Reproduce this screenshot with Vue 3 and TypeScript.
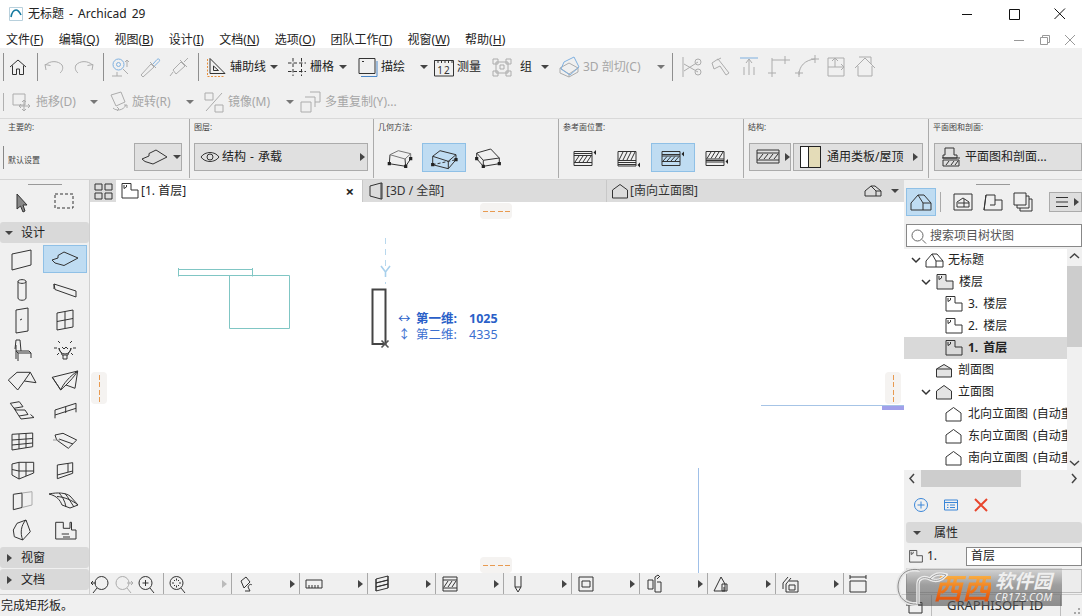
<script setup lang="ts">
import { h } from 'vue'

interface IconDef { d: string; w?: number; h?: number; acc?: string; ac?: string; fill?: string; dash?: string; accDash?: string; txt?: string; solid?: string }

const BLUE = '#7fb0e0'
const ORANGE = '#e8903c'
const dot = (x: number, y: number) => `M${x - 1.6} ${y - 1.6}h3.2v3.2h-3.2z`
const P: Record<string, IconDef> = {
  logo: { d: 'M1.5 1.5H14.5V14.5H1.5Z', w: 16, h: 16, acc: 'M3 11C4 6 6 4 8 4C10 4 11.5 6 13 9', ac: '#14799f' },
  home: { d: 'M4 12L12 5L20 12M6.5 10.5V19.5H10.5V14H13.5V19.5H17.5V10.5' },
  undo: { d: 'M4 15L3 9.5L8.5 10.5M3.5 10C8 5.5 16 5.5 20 10C21.5 13 20.5 16 18 18' },
  redo: { d: 'M20 15L21 9.5L15.5 10.5M20.5 10C16 5.5 8 5.5 4 10C2.5 13 3.5 16 6 18' },
  find: { d: 'M14 14L19 19M3 21H13M8 17V21M18 5V12M16 7L18 5L20 7', acc: 'M15 9.5A5.5 5.5 0 1 1 4 9.5A5.5 5.5 0 1 1 15 9.5M11.5 9.5A2 2 0 1 1 7.5 9.5A2 2 0 1 1 11.5 9.5' },
  pick: { d: 'M4 21L3 20L13 9L16 12L5 22ZM12 7L18 13', acc: 'M15 9L19 4.5C21 3 22.5 5 21 6.5L16.5 11' },
  inject: { d: 'M3 21L6 17M6 15L14 7L18 11L9 19ZM13 5L20 12M17 7L21 3' },
  guide: { d: 'M6 3.5V18.5H21ZM9.5 11V15.5H14.5Z', acc: 'M3.5 4V21.5H21', accDash: '2 1.5', ac: ORANGE },
  grid: { d: 'M8 3V21M16.5 3V21M3 8H21M3 16.5H21', dash: '3.5 2' },
  trace: { d: 'M4 3.5H20V18.5H4ZM7 6.5H9', acc: 'M6 21.5H22V6', ac: '#4a86c8' },
  measure: { d: 'M2.5 5.5H21.5V21H2.5ZM2.5 8V5.5M6 8V5.5M9.5 8V5.5M13 8V5.5M16.5 8V5.5M20 8V5.5', txt: '12' },
  group: { d: 'M6 7H18V18H6ZM3 4H8V9H3ZM16 4H21V9H16ZM3 16H8V21H3ZM16 16H21V21H16ZM10 10H14V14H10Z' },
  cut3d: { d: 'M3 13L12 8L21 13L12 19ZM3 13V18L12 22V19M21 13V17L12 22', acc: 'M7 7L17 2L22 12L13 20L4 14Z' },
  cut: { d: 'M4 2V22M5 9L19 17M5 16L19 7M22 7A3 3 0 1 1 16 7A3 3 0 1 1 22 7M22 17A3 3 0 1 1 16 17A3 3 0 1 1 22 17' },
  adjust: { d: 'M10 4L4 8L6 14L12 11L18 20L21 18L14 9L10 4M9 5L13 3' },
  intersect: { d: 'M12 4V20M7 12V20M17 12V20M9 8L12 4L15 8', acc: 'M3 3H21' },
  fillet: { d: 'M6 22V5H24M2 18H10M6 5V3M19 1V9' },
  arc: { d: 'M4 20C4 11 10 5 20 4M0 18H8M4 22V16M20 0V8M16 4H24' },
  move2: { d: 'M4 3H20V21H4ZM11 12H20M17 9L20 12L17 15M4 12H11M11 12V3M8 6L11 3L14 6' },
  roofhouse: { d: 'M2 13L12 3L22 13M5 11V21H19V11M6 2H18V9' },
  moveD: { d: 'M3 4H15V15H3ZM14 10V21M9 16H20M14 10L12 12M14 10L16 12M9 16L11 14M9 16L11 18M20 16L18 14M20 16L18 18M14 21L12 19M14 21L16 19' },
  rotateD: { d: 'M5 5L15 2L19 12L10 16ZM7 18C10 21 17 21 20 15M18 15H21V18M13 19L11 21M13 19L11 17' },
  mirror: { d: 'M4 21L20 3M3 3H11V10H3ZM13 15H21V22H13Z' },
  multi: { d: 'M3 12H13V22H3ZM7 7H17V17M12 2H22V12H17' },
  slabBtn: { d: 'M2 13L9 10V7.5L16 4L27 11L13 18L5 15.5Z', w: 30, h: 22 },
  eye: { d: 'M2 11C6 5 16 5 20 11C16 17 6 17 2 11ZM14 11A3 3 0 1 1 8 11A3 3 0 1 1 14 11', w: 22, h: 22 },
  g1: { d: 'M2.3 16.7L18.7 19.3L23.7 11.7M3 7.7L2.3 16.7M18 12L18.7 19.3', acc: 'M3 7.7L11.3 3.7L23.7 6.7V11.7M3 7.7L18 12L23.7 6.7', ac: '#777', solid: dot(2.3, 16.7) + dot(18.7, 19.3) + dot(23.7, 11.7), w: 26, h: 22 },
  g2: { d: 'M1.7 9.3L9 3.7L25 7.7L17.3 14.3ZM1.7 9.3V17.7L17.3 21.7L25 12.7V7.7M17.3 14.3V21.7', acc: 'M1.7 17.7L25 12.7', ac: '#333', accDash: '3 2', solid: dot(1.7, 17.7) + dot(25, 12.7), w: 26, h: 22 },
  g3: { d: 'M1.7 6L15.7 2L24.3 11L8.3 13.3ZM1.7 6V11.7L8.3 19.3L24.3 16.7V11M8.3 13.3V19.3', solid: dot(1.7, 11.7) + dot(8.3, 19.3) + dot(24.3, 16.7), w: 26, h: 22 },
  r1: { d: 'M2 4.5H20M2 6.5H20M2 8.5H20M2 15.5H20M2 18.5H20M2 4.5V18.5M20 4.5V18.5M3 15L7 9M7 15L11 9M11 15L15 9M15 15L19 9', solid: 'M24 3V8L21.5 5.5Z', w: 26, h: 22 },
  r2: { d: 'M2 4.5H20M2 13.5H20M2 15.5H20M2 17.5H20M2 19H20M2 4.5V19M20 4.5V19M3 13L7 5M7 13L11 5M11 13L15 5M15 13L19 5', solid: 'M24 15.5V20.5L21.5 18Z', w: 26, h: 22 },
  r3: { d: 'M2 4.5H20M2 7.5H20M2 9H20M2 14.5H20M2 18.5H20M2 4.5V18.5M20 4.5V18.5M3 14L7 9.5M7 14L11 9.5M11 14L15 9.5M15 14L19 9.5', solid: 'M24 4.5V9.5L21.5 7Z', w: 26, h: 22 },
  r4: { d: 'M2 4.5H20M2 12H20M2 13.5H20M2 15H20M2 18.5H20M2 4.5V18.5M20 4.5V18.5M3 11.5L7 5M7 11.5L11 5M11 11.5L15 5M15 11.5L19 5', solid: 'M24 12V17L21.5 14.5Z', w: 26, h: 22 },
  structBtn: { d: 'M2 3H24V16H2ZM2 6H24M2 13H24M4 12L8 7M9 12L13 7M14 12L18 7M19 12L23 7', w: 26, h: 20 },
  plan: { d: 'M4 2H13V9H16V12H2V9H4ZM1 12H19M2 14H18V20H2ZM5 19L8 15M10 19L13 15M14 19L17 15', w: 20, h: 22 },
  arrow: { d: 'M6 3L16 14L12 14L14 20L12 21L9.5 15L6 18Z', w: 22, h: 24, fill: '#888' },
  marquee: { d: 'M2 3H20V17H2Z', w: 22, h: 20, dash: '3 2' },
  wall: { d: 'M5 7L24 3V18L5 23Z', w: 30, h: 26 },
  slab: { d: 'M2 14L8 12V9.5L14 6L28 12L14 19.5L5 17Z', w: 30, h: 26 },
  column: { d: 'M11 4.5C11 2 19 2 19 4.5V21C19 24 11 24 11 21ZM11 4.5C11 7 19 7 19 4.5', w: 30, h: 26 },
  beam: { d: 'M4 7L26 14V20L5 12.5ZM4 7V12', w: 30, h: 26 },
  door: { d: 'M9 3L21 1V24L9 26ZM13 13L15 12', w: 30, h: 27 },
  win: { d: 'M7 6L23 3V20L7 23ZM7 14.5L23 11.5M15 5V21', w: 30, h: 26 },
  chair: { d: 'M9 8L9 22M9 3H13L14 14M9 14H22L24 16H11L9 14M11 16V24M24 16V21M9 3L8 12', w: 30, h: 26 },
  lamp: { d: 'M21 11A6 6 0 1 1 9 11C9 14 12 15 12 18H18C18 15 21 14 21 11ZM13 18V22H17V18M4 11H7M23 11H26M8 4L10 6M22 4L20 6M7 18L9 16M23 18L21 16M12 10L14 12L16 10L18 12', w: 30, h: 26 },
  roof: { d: 'M1.3 13L10 5.3H23.3L29 15.7L17.3 14L10.7 23ZM23.3 5.3L17.3 14', w: 30, h: 26 },
  shell: { d: 'M2.3 10.3L27.7 4L25 21.3L16 18L10.7 23ZM2.3 10.3C6 16 9 20 10.7 23C13 17 20 9 27.7 4M16 18C20 14 24 10 27.7 4', w: 30, h: 26 },
  stair: { d: 'M3.3 6.3L12.3 4.7L16 9.7L7 11.3ZM7 11.3L9 13H18L21 17.5L12 19ZM12 19L14 22L27 20.5L23.5 17.5', w: 30, h: 26 },
  rail: { d: 'M5 13L26 6.3M5 18L26 11.3M5 21.3V13M15.7 9.7V16M26 6.3V15.3', w: 30, h: 26 },
  curtain: { d: 'M5 7.3L25.7 6V19.7L5 23ZM5 13L25.7 11.5M5 18L25.7 16M12 7V22M19 6.5V21', w: 30, h: 26 },
  mesh: { d: 'M5 8L13 6.3L26.7 13L18.3 21.3L6.7 13ZM9 12L23 17', acc: 'M3 13H10', ac: '#999', w: 30, h: 26 },
  gridBox: { d: 'M5 7L12 5.3H26.7V16L12 22L5 18ZM12 5.3V22M5 12.5L12 14H26.7M19 5.3V19', w: 30, h: 26 },
  opening: { d: 'M7.3 8L22.7 5.7V16.3L7.3 21.7ZM7.3 18L22.7 14M18 6.5V15', w: 30, h: 26 },
  panel: { d: 'M6.3 7.3L15 6V20.5L6.3 22.7Z', acc: 'M15 6L25 4.7V18L15 20.5', ac: '#aaa', w: 30, h: 26 },
  morph: { d: 'M-1 7C8 5 16 6 20 9L28 18L20 21L12 18C10 13 7 9 -1 7M9 6C12 9 15 14 16 20M15 6.5C18 10 20 14 24 20M7 9.5C14 10 22 13 28 18', w: 30, h: 26 },
  shape: { d: 'M6.3 13L10 6.3L19 3L23.3 14.7L15.7 23L7.3 19.7ZM19 3C14 8 13 16 15.7 23', w: 30, h: 26 },
  zone: { d: 'M5.7 5.3H13.3V11.3H20V5.3H21.5V13H26V22H5.7ZM11.7 17H19M13 20H20', w: 30, h: 26 },
  tabGrid: { d: 'M3 2H10V8H3ZM13 2H20V8H13ZM3 11H10V17H3ZM13 11H20V17H13Z', w: 23, h: 19 },
  story: { d: 'M2 1.5H11V8H18V16H2ZM4 3V6.5L6.5 5V3', w: 20, h: 18 },
  tab3d: { d: 'M3 4L14 1V17L3 14ZM14 1H15V17H14', w: 18, h: 18 },
  elev: { d: 'M1.5 8L9 2.5L16.5 8V16H1.5Z', w: 18, h: 18 },
  elevT: { d: 'M2 8L9.5 2.5L17 8V16H2Z', w: 20, h: 18 },
  sect: { d: 'M1.5 8L9 3.5L16.5 8V16H1.5ZM1.5 8H16.5', w: 19, h: 18, fill: '#e4e4e4' },
  elevF: { d: 'M1.5 8L9 2.5L16.5 8V16H1.5Z', w: 19, h: 18, fill: '#e4e4e4' },
  storyF: { d: 'M2 1.5H11V8H18V16H2ZM4 3V6.5L6.5 5V3', w: 20, h: 18, fill: '#e4e4e4' },
  proj: { d: 'M2 11L9 3H15L22 11V18H2ZM9 3L14 11M14 11H22M14 11V18', w: 24, h: 20 },
  projS: { d: 'M1 10L7 3H12L18 10V16H1ZM7 3L11 10M11 10H18M11 10V16', w: 19, h: 18 },
  tabHouse: { d: 'M2 10L8 5H12L18 10V15H2ZM8 5L13 10H18M13 10V15', w: 20, h: 20 },
  nav1: { d: 'M2 2H20V18H2ZM5 15V10L11 6L17 10V15ZM12 7V15M6 11H17', w: 22, h: 20 },
  nav2: { d: 'M4 3H13V8H20V18H2ZM2 18L4 3M13 8V13H8', w: 22, h: 20 },
  nav3: { d: 'M2 2H14V14H2ZM5 14V17H17V5H14M8 17V20H20V8H17', w: 22, h: 22 },
  search: { d: 'M12 7.5A5.5 5.5 0 1 1 1 7.5A5.5 5.5 0 1 1 12 7.5M11 11.5L15 15.5', w: 16, h: 16 },
  zoomBack: { d: 'M18 9A6.5 6.5 0 1 1 5 9A6.5 6.5 0 1 1 18 9M7 14L3 19M1 9H6M1 9L3 7M1 9L3 11', w: 20, h: 20 },
  zoomFwd: { d: 'M15 9A6.5 6.5 0 1 1 2 9A6.5 6.5 0 1 1 15 9M13 14L17 19M13 9H19M19 9L17 7M19 9L17 11', w: 20, h: 20 },
  zoomIn: { d: 'M15 9A6.5 6.5 0 1 1 2 9A6.5 6.5 0 1 1 15 9M13 14L17 19M8.5 6V12M5.5 9H11.5', w: 20, h: 20 },
  zoomFit: { d: 'M15 9A6.5 6.5 0 1 1 2 9A6.5 6.5 0 1 1 15 9M13 14L17 19M8.5 4.5V6.5M8.5 11.5V13.5M4 9H6M11 9H13M6 6L7 7M11 6L10 7M6 12L7 11M11 12L10 11', w: 20, h: 20 },
  b1: { d: 'M5 7L10 3L14 8L8 14ZM9 17L14 17L12 13M12 13C13 10 15 10 16 11', w: 20, h: 20 },
  b2: { d: 'M2 6H18V14H2ZM5 11V14M8 11V14M11 11V14M14 11V14', w: 20, h: 20 },
  b3: { d: 'M4 5L16 2V6L4 9ZM4 9L16 6V10L4 13ZM4 13L16 10V14L4 17ZM4 5V17M16 2V14', w: 20, h: 20 },
  b4: { d: 'M3 3H17V17H3ZM3 6H17M3 14H17M4 13L8 7M8 13L12 7M12 13L16 7', w: 20, h: 20 },
  b5: { d: 'M7 2V13L10 18L13 13V2M7 13H13', w: 20, h: 20 },
  b6: { d: 'M3 3H17V17H3ZM6 7H14V13H6Z', w: 20, h: 20 },
  b7: { d: 'M4 6H9V15H4ZM11 8V3L14 1L16 3M13 8H17V18H11V8M13 5L15 3', w: 20, h: 20 },
  b8: { d: 'M2 17L9 3L13 10V17ZM10 10H15V17H10ZM12 13V17', w: 20, h: 20 },
  b9: { d: 'M3 9L8 3M6 10L11 4M9 7H18V18H6V10M3 9V15M9 11H15V16H9Z', w: 20, h: 20 },
  b10: { d: 'M2 7H18V18H2ZM2 1V5M18 1V5M2 3H18', w: 20, h: 20 },
  winSmall: { d: 'M5 5.5H18V16H5ZM5 8H18M1 2V6M1 4H4', w: 20, h: 18 }
}

const Ic = (props: { n: string }) => {
  const i = P[props.n]
  const w = i.w ?? 24
  const hh = i.h ?? 24
  const kids = [h('path', { d: i.d, fill: i.fill ?? 'none', 'stroke-dasharray': i.dash })]
  if (i.acc) kids.push(h('path', { d: i.acc, fill: 'none', stroke: i.ac ?? BLUE, 'stroke-dasharray': i.accDash }))
  if (i.solid) kids.push(h('path', { d: i.solid, fill: '#222', stroke: 'none' }))
  if (i.txt) kids.push(h('text', { x: 12, y: 19, 'text-anchor': 'middle', 'font-size': 10, fill: '#333', stroke: 'none', 'letter-spacing': 1 }, i.txt))
  return h('svg', { class: 'ic', width: w, height: hh, viewBox: `0 0 ${w} ${hh}` }, kids)
}
Ic.props = ['n']

const menus: [string, string][] = [['文件', 'F'], ['编辑', 'Q'], ['视图', 'B'], ['设计', 'I'], ['文档', 'N'], ['选项', 'O'], ['团队工作', 'T'], ['视窗', 'W'], ['帮助', 'H']]

const row2 = [
  { icon: 'moveD', label: '拖移(D)', cls: 't2-move', arr: true },
  { icon: 'rotateD', label: '旋转(R)', cls: 't2-rot', arr: true },
  { icon: 'mirror', label: '镜像(M)', cls: 't2-mir', arr: true },
  { icon: 'multi', label: '多重复制(Y)...', cls: 't2-mul', arr: false }
]

const tools = ['wall', 'slab', 'column', 'beam', 'door', 'win', 'chair', 'lamp', 'roof', 'shell', 'stair', 'rail', 'curtain', 'mesh', 'gridBox', 'opening', 'panel', 'morph', 'shape', 'zone']

const tree = [
  { icon: 'projS', label: '无标题', lvl: 0, chev: true },
  { icon: 'storyF', label: '楼层', lvl: 1, chev: true },
  { icon: 'story', label: '3. 楼层', lvl: 2, chev: false },
  { icon: 'story', label: '2. 楼层', lvl: 2, chev: false },
  { icon: 'story', label: '1. 首层', lvl: 2, chev: false, sel: true },
  { icon: 'sect', label: '剖面图', lvl: 1, chev: false },
  { icon: 'elevF', label: '立面图', lvl: 1, chev: true },
  { icon: 'elevT', label: '北向立面图 (自动重建模型)', lvl: 2, chev: false },
  { icon: 'elevT', label: '东向立面图 (自动重建模型)', lvl: 2, chev: false },
  { icon: 'elevT', label: '南向立面图 (自动重建模型)', lvl: 2, chev: false }
]

const bottom = ['b1', 'b2', 'b3', 'b4', 'b5', 'b6', 'b7', 'b8', 'b9']
const cutIcons = ['cut', 'adjust', 'intersect', 'fillet', 'arc', 'move2', 'roofhouse']
</script>

<template>
  <div class="app">
    <header class="title">
      <Ic n="logo" class="tlogo" />
      <span>无标题 - Archicad 29</span>
      <div class="winbtns">
        <svg class="wb" width="14" height="14" viewBox="0 0 14 14"><path d="M1 7.5H11" /></svg>
        <svg class="wb" width="14" height="14" viewBox="0 0 14 14"><path d="M2.5 2.5H12.5V12.5H2.5Z" /></svg>
        <svg class="wb" width="14" height="14" viewBox="0 0 14 14"><path d="M1.5 1.5L12 12M12 1.5L1.5 12" /></svg>
      </div>
    </header>

    <nav class="menu">
      <span v-for="m in menus" :key="m[1]" class="mi">{{ m[0] }}(<u>{{ m[1] }}</u>)</span>
      <div class="mdi">
        <svg width="14" height="14" viewBox="0 0 14 14"><path d="M1 7.5H11" /></svg>
        <svg width="14" height="14" viewBox="0 0 14 14"><path d="M2.5 4.5H9.5V11.5H2.5ZM4.5 4.5V2.5H11.5V9.5H9.5" /></svg>
        <svg width="14" height="14" viewBox="0 0 14 14"><path d="M2 2L12 12M12 2L2 12" /></svg>
      </div>
    </nav>

    <section class="toolbars">
      <div class="row row1">
        <i class="sep"></i>
        <div class="cell c-home"><Ic n="home" /></div>
        <i class="sep"></i>
        <div class="cells c-undo dim"><Ic n="undo" /><Ic n="redo" /></div>
        <i class="sep"></i>
        <div class="cells c-pick dim"><Ic n="find" /><Ic n="pick" /><Ic n="inject" /></div>
        <i class="sep"></i>
        <div class="tool t-guide"><span class="ti"><Ic n="guide" /></span><span class="lbl">辅助线</span><b class="arr"></b></div>
        <div class="tool t-grid"><span class="ti"><Ic n="grid" /></span><span class="lbl">栅格</span><b class="arr"></b></div>
        <div class="tool t-trace"><span class="ti"><Ic n="trace" /></span><span class="lbl">描绘</span><b class="arr"></b></div>
        <div class="tool t-meas"><span class="ti"><Ic n="measure" /></span><span class="lbl">测量</span></div>
        <div class="tool t-group"><span class="ti dim"><Ic n="group" /></span><span class="lbl">组</span><b class="arr"></b></div>
        <div class="tool t-cut dim"><span class="ti"><Ic n="cut3d" /></span><span class="lbl">3D 剖切(C)</span><b class="arr"></b></div>
        <i class="sep"></i>
        <div class="cells c-edit dim"><Ic v-for="n in cutIcons" :key="n" :n="n" /></div>
      </div>
      <div class="row row2">
        <i class="sep"></i>
        <div v-for="t in row2" :key="t.icon" class="tool dim" :class="t.cls">
          <span class="ti"><Ic :n="t.icon" /></span><span class="lbl">{{ t.label }}</span><b v-if="t.arr" class="arr"></b>
        </div>
      </div>
    </section>

    <section class="info">
      <div class="sec s1">
        <div class="cap">主要的:</div>
        <div class="ctl">
          <i class="tick"></i><span class="cap default">默认设置</span>
          <div class="btn favbtn"><Ic n="slabBtn" /><i class="vdiv"></i><b class="arr"></b></div>
        </div>
      </div>
      <div class="sec s2">
        <div class="cap">图层:</div>
        <div class="ctl">
          <div class="btn layer"><Ic n="eye" /><span class="btxt">结构 - 承载</span><b class="arr right"></b></div>
        </div>
      </div>
      <div class="sec s3">
        <div class="cap">几何方法:</div>
        <div class="ctl opts">
          <div class="opt"><Ic n="g1" /></div>
          <div class="opt on"><Ic n="g2" /></div>
          <div class="opt"><Ic n="g3" /></div>
        </div>
      </div>
      <div class="sec s4">
        <div class="cap">参考面位置:</div>
        <div class="ctl opts">
          <div class="opt"><Ic n="r1" /></div>
          <div class="opt"><Ic n="r2" /></div>
          <div class="opt on"><Ic n="r3" /></div>
          <div class="opt"><Ic n="r4" /></div>
        </div>
      </div>
      <div class="sec s5">
        <div class="cap">结构:</div>
        <div class="ctl struct">
          <div class="btn st1"><Ic n="structBtn" /><b class="arr right"></b></div>
          <div class="btn st2"><i class="swatch"><i class="sw-l"></i><i class="sw-r"></i></i><span class="btxt">通用类板/屋顶</span><b class="arr right"></b></div>
        </div>
      </div>
      <div class="sec s6">
        <div class="cap">平面图和剖面:</div>
        <div class="ctl">
          <div class="btn fp"><Ic n="plan" /><span class="btxt">平面图和剖面...</span></div>
        </div>
      </div>
    </section>

    <main class="body">
      <aside class="palette">
        <div class="grip"></div>
        <div class="ptop"><Ic n="arrow" /><Ic n="marquee" /></div>
        <div class="phead"><b class="arr"></b><span>设计</span></div>
        <div class="pgrid">
          <div v-for="t in tools" :key="t" class="pcell" :class="{ on: t === 'slab' }"><Ic :n="t" /></div>
        </div>
        <div class="phead closed"><b class="arr right"></b><span>视窗</span></div>
        <div class="phead closed"><b class="arr right"></b><span>文档</span></div>
      </aside>

      <div class="center">
        <div class="tabs">
          <div class="tgrid"><Ic n="tabGrid" /></div>
          <div class="tab active"><Ic n="story" /><span>[1. 首层]</span><span class="tclose">×</span></div>
          <div class="tab"><Ic n="tab3d" /><span>[3D / 全部]</span></div>
          <div class="tab t3"><Ic n="elev" /><span>[南向立面图]</span></div>
          <div class="tright"><Ic n="tabHouse" /><b class="arr"></b></div>
        </div>
        <div class="canvas">
          <svg class="draw" width="814" height="371" viewBox="90 202 814 371">
            <path d="M229.5 275.5H289.5V328.5H229.5ZM178.5 269.5H252.5V275.5H178.5ZM178.5 268V276.5M252.5 268V276.5" fill="none" stroke="#80c6c4" />
            <path d="M761 405.5H904" stroke="#a6c4e6" fill="none" />
            <path d="M698.5 468V573" stroke="#a0c0e8" fill="none" />
            <rect x="882" y="406" width="22" height="4" fill="#a0a0ea" />
            <path d="M385.5 238V284" stroke="#b8d8ee" stroke-dasharray="6 5" fill="none" />
            <path d="M381 266L385.5 272L390 266M385.5 272V277" stroke="#a8d0ec" stroke-width="1.6" fill="none" />
            <path d="M372.5 289.5H385.5V344H372.5Z" fill="none" stroke="#444" stroke-width="2" />
            <path d="M381.5 340.5L388.5 347.5M388.5 340.5L381.5 347.5" stroke="#555" stroke-width="1.6" fill="none" />
          </svg>
          <div class="handle h-top"><i></i></div>
          <div class="handle h-bot"><i></i></div>
          <div class="handle v h-left"><i></i></div>
          <div class="handle v h-right"><i></i></div>
          <div class="dims">
            <div class="dim-row strong"><span class="sym">↔</span><span class="dk">第一维:</span><span>1025</span></div>
            <div class="dim-row"><span class="sym">↕</span><span class="dk">第二维:</span><span>4335</span></div>
          </div>
        </div>
        <div class="bottombar">
          <div class="zooms">
            <span><Ic n="zoomBack" /></span>
            <span class="dim"><Ic n="zoomFwd" /></span>
            <span><Ic n="zoomIn" /></span>
          </div>
          <div class="bcell"><Ic n="zoomFit" /><b class="arr right faint"></b></div>
          <div v-for="n in bottom" :key="n" class="bcell"><Ic :n="n" /><b class="arr right"></b></div>
          <div class="bcell last"><Ic n="b10" /></div>
        </div>
      </div>

      <aside class="panel">
        <div class="grip"></div>
        <div class="navtabs">
          <div class="ntab on"><Ic n="proj" /></div>
          <i class="nsep"></i>
          <div class="ntab"><Ic n="nav1" /></div>
          <div class="ntab"><Ic n="nav2" /></div>
          <div class="ntab"><Ic n="nav3" /></div>
          <div class="nmenu"><svg width="16" height="12" viewBox="0 0 16 12"><path d="M1 1.5H13M1 6H13M1 10.5H13" /></svg><b class="arr right"></b></div>
        </div>
        <div class="searchbox"><Ic n="search" /><span>搜索项目树状图</span></div>
        <div class="treewrap">
          <div class="tree">
            <div v-for="r in tree" :key="r.label" class="trow" :class="[`l${r.lvl}`, { sel: r.sel }]">
              <svg v-if="r.chev" class="chev" width="10" height="10" viewBox="0 0 10 10"><path d="M1 3L5 7L9 3" /></svg>
              <Ic :n="r.icon" />
              <span class="tlabel">{{ r.label }}</span>
            </div>
          </div>
          <div class="vscroll">
            <svg class="sa" width="15" height="15" viewBox="0 0 15 15"><path d="M3 9L7.5 5L12 9" /></svg>
            <div class="vtrack"><div class="vthumb"></div></div>
            <svg class="sa" width="15" height="15" viewBox="0 0 15 15"><path d="M3 6L7.5 10L12 6" /></svg>
          </div>
        </div>
        <div class="hscroll">
          <svg class="sa" width="17" height="17" viewBox="0 0 17 17"><path d="M10 4L6 8.5L10 13" /></svg>
          <div class="htrack"><div class="hthumb"></div></div>
          <svg class="sa" width="17" height="17" viewBox="0 0 17 17"><path d="M7 4L11 8.5L7 13" /></svg>
        </div>
        <div class="nactions">
          <svg width="16" height="16" viewBox="0 0 16 16" class="blue"><path d="M14.5 8A6.5 6.5 0 1 1 1.5 8A6.5 6.5 0 1 1 14.5 8M8 4.5V11.5M4.5 8H11.5" /></svg>
          <svg width="16" height="16" viewBox="0 0 16 16" class="blue"><path d="M1.5 3H14.5V13H1.5ZM1.5 5.5H14.5M4 8H5.5M7 8H12M4 10.5H5.5M7 10.5H12" /></svg>
          <svg width="16" height="16" viewBox="0 0 16 16" class="red"><path d="M2 2L14 14M14 2L2 14" /></svg>
        </div>
        <div class="phead props"><b class="arr"></b><span>属性</span></div>
        <div class="proprow">
          <Ic n="story" class="small" /><span class="pnum">1.</span>
          <div class="pinput">首层</div>
        </div>
        <div class="pfoot"><div class="pbox"></div></div>
        <div class="watermark">
          <svg class="wlogo" width="52" height="42" viewBox="0 0 52 42">
            <path d="M24 4C10 1 2 10 2 21C2 32 10 39 22 38" fill="none" stroke="#e6e6e6" stroke-width="4" />
            <path d="M24 4C10 1 2 10 2 21C2 32 10 39 22 38" fill="none" stroke="#8a8a8a" stroke-width="1" />
            <path d="M22 38V18C22 12 28 10 34 13C38 8 44 7 50 9C46 14 40 16 34 13" fill="none" stroke="#ececec" stroke-width="3.5" />
            <path d="M22 38V18C22 12 28 10 34 13C38 8 44 7 50 9C46 14 40 16 34 13" fill="none" stroke="#8a8a8a" stroke-width=".8" />
          </svg>
          <span class="wm-x">西西</span>
          <span class="wm-sub"><span class="wm-s">软件园</span><span class="wm-c">CR173.COM</span></span>
        </div>
      </aside>
    </main>

    <footer class="status">
      <span>完成矩形板。</span>
      <div class="sright">
        <Ic n="winSmall" />
        <i class="svl"></i>
        <span class="gid">GRAPHISOFT ID</span>
        <i class="svl r"></i>
        <i class="sgrip"></i>
      </div>
    </footer>
  </div>
</template>

<style scoped>
.app {
  position: relative;
  width: 1082px;
  height: 616px;
  overflow: hidden;
  background: #f0f0f0;
  color: #222;
  display: flex;
  flex-direction: column;
  font: 12px/1 "Noto Sans", "Noto Sans CJK SC", sans-serif;
}
.ic { fill: none; stroke: #333; stroke-width: 1; display: block; flex: none; overflow: visible; }
.dim, .dim .ic { color: #a6a6a6; stroke: #acacac; }
.dim :deep(text) { fill: #aaa; }

.title { height: 27px; background: #fff; display: flex; align-items: center; padding-left: 8px; }
.title span { margin-left: 4px; font-size: 12px; word-spacing: 2px; }
.tlogo { stroke: #b8d0dc; stroke-width: 1; }
.tlogo :deep(path + path) { stroke-width: 1.6; }
.winbtns { margin-left: auto; display: flex; width: 106px; margin-right: 15px; justify-content: space-between; }
.wb { fill: none; stroke: #111; stroke-width: 1; }

.menu { height: 21px; box-sizing: border-box; padding: 4px 0 0 6px; background: #fff; display: flex; align-items: center; gap: 15.2px; }
.mi { white-space: nowrap; color: #222; }
.mdi { margin-left: auto; display: flex; gap: 11px; padding-right: 5px; }
.mdi svg { fill: none; stroke: #999; }

.toolbars { height: 70px; border-bottom: 1px solid #d9d9d9; box-sizing: content-box; }
.row { display: flex; align-items: center; }
.row1 { height: 37px; padding-left: 3px; }
.row2 { height: 33px; padding-left: 3px; }
.sep { width: 1px; height: 28px; background: #8f8f8f; flex: none; }
.row2 .sep { height: 18px; background: #b0b0b0; }
.cell, .cells { display: flex; align-items: center; }
.c-home { width: 33px; padding-left: 2px; box-sizing: border-box; }
.c-undo { padding: 0 7px 0 4px; gap: 6px; }
.c-pick { padding: 0 7px 0 5px; gap: 5px; }
.c-edit { padding-left: 6px; gap: 5px; }
.tool { display: flex; align-items: center; }
.ti { width: 26px; display: flex; justify-content: center; flex: none; }
.lbl { white-space: nowrap; flex: none; }
.arr { display: block; width: 18px; height: 8px; flex: none; position: relative; }
.arr::before { content: ""; position: absolute; left: 50%; top: 2px; margin-left: -4px; border-style: solid; border-width: 4px 4px 0; border-color: #444 transparent transparent; }
.arr.right::before { top: 0; margin-left: -2px; border-width: 4px 0 4px 5px; border-color: transparent transparent transparent #444; }
.arr.faint::before { border-left-color: #bbb; }
.dim .arr::before { border-top-color: #777; }

.t-guide { margin-left: 3px; }
.t-guide .ti { width: 28px; }
.t-guide .lbl { width: 36px; }
.t-guide .arr { width: 16px; }
.t-grid { margin-left: 2px; }
.t-grid .lbl { width: 24px; }
.t-trace { margin-left: 2px; }
.t-trace .lbl { width: 24px; margin-left: 1px; margin-right: 10px; }
.t-meas .ti { width: 22px; }
.t-meas .lbl { margin-left: 2px; width: 24px; }
.t-group { margin-left: 8px; }
.t-group .lbl { margin-left: 5px; width: 12px; margin-right: 4px; }
.t-cut { margin-left: 2px; margin-right: 2px; }
.t-cut .lbl { margin-left: 1px; width: 60px; margin-right: 9px; }

.tool[class*="t2-"] { margin-left: 2px; }
.tool[class*="t2-"] .lbl { margin-left: 1px; width: 40px; }
.tool[class*="t2-"] .arr { margin-left: 9px; }
.t2-move { margin-left: 5px !important; }
.t2-mir .lbl { width: 44px !important; }
.t2-mul { margin-left: -2px !important; }
.t2-mul .lbl { margin-left: 2px !important; width: auto !important; }

.info { height: 60px; display: flex; border-bottom: 1px solid #d4d4d4; }
.sec { border-right: 1px solid #ababab; box-sizing: border-box; padding-top: 3px; margin-bottom: 1px; position: relative; flex: none; }
.cap { font-size: 8px; height: 20px; padding-left: 4px; padding-top: 1px; color: #444; white-space: nowrap; }
.ctl { display: flex; align-items: center; }
.s1 { width: 190px; }
.s1 .cap { padding-left: 8px; }
.s2 { width: 184px; }
.s3 { width: 185px; }
.s4 { width: 185px; }
.s5 { width: 185px; }
.s6 { width: 153px; border-right: 0; }
.tick { width: 1px; height: 23px; background: #888; margin-left: 3px; }
.s1 .cap.default { padding: 0; margin-left: 4px; height: auto; margin-top: 6px; }
.btn { background: #e0e0e0; border: 1px solid #ababab; box-sizing: border-box; height: 28px; display: flex; align-items: center; }
.favbtn { width: 48px; margin-left: 94px; padding-left: 5px; }
.favbtn .ic { width: 30px; }
.vdiv { width: 1px; height: 24px; background: #aaa; margin-left: 1px; }
.favbtn .arr { width: 11px; }
.layer { width: 174px; margin-left: 4px; padding-left: 4px; }
.layer .btxt { margin-left: 1px; word-spacing: 1px; }
.layer .arr { margin-left: auto; width: 11px; }
.btxt { white-space: nowrap; }
.opts { padding-left: 4px; }
.opt { width: 44px; height: 29px; box-sizing: border-box; display: flex; align-items: center; justify-content: center; position: relative; }
.opt.on { background: #bfdcf2; border: 1px solid #8fc0e6; }
.struct { padding-left: 5px; gap: 2px; }
.st1 { width: 42px; padding-left: 5px; }
.st1 .arr { width: 9px; margin-left: 1px; }
.st2 { width: 130px; padding-left: 6px; }
.st2 .btxt { margin-left: 6px; }
.st2 .arr { margin-left: 6px; width: 11px; }
.swatch { display: flex; width: 21px; height: 22px; border: 1px solid #222; flex: none; box-sizing: border-box; }
.sw-l { width: 7px; background: radial-gradient(#999 30%, #fff 32%) 0 0 / 2px 2px; border-right: 1px solid #222; }
.sw-r { flex: 1; background: #e4dcb8 radial-gradient(#a89a68 30%, transparent 32%) 0 0 / 2px 2px; }
.fp { width: 148px; margin-left: 5px; padding-left: 6px; }
.fp .btxt { margin-left: 4px; }

.body { flex: 1; display: flex; min-height: 0; }
.palette { width: 90px; flex: none; border-right: 1px solid #d0d0d0; box-sizing: border-box; display: flex; flex-direction: column; }
.grip { height: 1px; background: #999; width: 34px; margin: 4px auto 0; flex: none; }
.ptop { display: flex; justify-content: space-between; padding: 6px 14px 0 11px; height: 37px; box-sizing: border-box; }
.phead { height: 21px; flex: none; background: #d9d9d9; border-radius: 3px; display: flex; align-items: center; font-size: 12px; }
.phead .arr { width: 17px; margin-right: 4px; margin-left: 0; }
.phead.closed { margin-bottom: 1px; }
.pgrid { display: grid; grid-template-columns: 43px 44px; grid-auto-rows: 30px; padding-top: 2px; height: 304px; box-sizing: border-box; }
.pcell { display: flex; align-items: center; justify-content: center; }
.pcell.on { background: #bfdcf2; border: 1px solid #8fc0e6; box-sizing: border-box; height: 28px; align-self: start; }
.center { width: 814px; flex: none; display: flex; flex-direction: column; }
.tabs { height: 22px; display: flex; background: #dcdcdc; flex: none; }
.tgrid { width: 26px; display: flex; align-items: center; justify-content: center; }
.tab { width: 244px; display: flex; align-items: center; padding-left: 4px; box-sizing: border-box; gap: 1px; border-left: 1px solid #c8c8c8; white-space: nowrap; color: #333; }
.tab.t3 { width: 254px; }
.tab.active { background: #fff; width: 246px; border-left: 0; color: #222; }
.tclose { margin-left: auto; margin-right: 8px; font-size: 15px; font-weight: 700; }
.tright { display: flex; align-items: center; flex: 1; padding-left: 3px; }
.tright .arr { margin-left: 3px; }
.canvas { flex: none; height: 371px; background: #fff; position: relative; }
.draw { position: absolute; left: 0; top: 0; display: block; }
.handle { position: absolute; width: 32px; height: 16px; background: #f5f3f1; border-radius: 4px; display: flex; align-items: center; justify-content: center; }
.handle i { display: block; width: 27px; height: 1px; background: repeating-linear-gradient(90deg, #e89a50 0 5px, transparent 5px 7.3px); }
.handle.v { width: 16px; height: 32px; }
.handle.v i { width: 1px; height: 27px; background: repeating-linear-gradient(180deg, #e89a50 0 5px, transparent 5px 7.3px); }
.h-top { left: 390px; top: 1px; }
.h-bot { left: 390px; bottom: 0; }
.h-left { left: 1px; top: 170px; }
.h-right { left: 795px; top: 170px; }
.dims { position: absolute; left: 308px; top: 109px; color: #3b6fd0; font-size: 12.5px; line-height: 16px; }
.dim-row { display: flex; white-space: nowrap; }
.dim-row.strong { font-weight: 700; color: #2a5fc8; }
.sym { width: 18px; font-weight: 400; }
.dk { width: 53px; }
.bottombar { height: 21px; flex: none; display: flex; align-items: center; }
.zooms { display: flex; width: 73px; box-sizing: border-box; justify-content: space-between; padding: 0 6px 0 0; }
.bcell { width: 68px; height: 21px; box-sizing: border-box; border-left: 1px solid #a8a8a8; display: flex; align-items: center; padding-left: 4px; flex: none; }
.bcell .arr { margin-left: auto; width: 15px; }
.bcell.last { width: auto; }

.panel { flex: 1; min-width: 0; position: relative; display: flex; flex-direction: column; }
.navtabs { display: flex; align-items: center; height: 33px; padding-left: 2px; flex: none; }
.ntab { width: 30px; height: 28px; display: flex; align-items: center; justify-content: center; box-sizing: border-box; flex: none; }
.ntab.on { background: #bfdcf2; border: 1px solid #8fc0e6; margin-right: 4px; }
.nsep { width: 1px; height: 20px; background: #aaa; margin-right: 7px; }
.nmenu { width: 33px; height: 20px; background: #dedede; border: 1px solid #ababab; box-sizing: border-box; display: flex; align-items: center; padding-left: 5px; margin-left: 11px; }
.nmenu svg { fill: none; stroke: #333; }
.nmenu .arr { width: 9px; }
.searchbox { margin-left: 2px; height: 23px; border: 1px solid #888; background: #fff; box-sizing: border-box; display: flex; align-items: center; padding-left: 4px; gap: 3px; color: #555; margin-top: 6px; flex: none; }
.searchbox .ic { stroke: #666; }
.treewrap { display: flex; height: 221px; flex: none; margin-top: 2px; }
.tree { width: 163px; background: #fff; overflow: hidden; flex: none; }
.trow { height: 22px; display: flex; align-items: center; gap: 4px; white-space: nowrap; overflow: hidden; position: relative; }
.trow.l0 { padding-left: 7px; }
.trow.l1 { padding-left: 17px; }
.trow.l2 { padding-left: 40px; }
.trow.l1:not(:has(.chev)) { padding-left: 31px; }
.trow .tlabel { font-size: 12px; word-spacing: 2px; }
.trow.sel { background: #d9d9d9; font-weight: 700; }
.chev { fill: none; stroke: #333; stroke-width: 1.5; flex: none; }
.vscroll { width: 15px; display: flex; flex-direction: column; background: #f0f0f0; }
.vtrack { flex: 1; position: relative; }
.vthumb { height: 81px; background: #cdcdcd; margin-top: 2px; }
.sa { fill: none; stroke: #444; stroke-width: 1.5; display: block; flex: none; }
.hscroll { height: 17px; display: flex; flex: none; }
.htrack { flex: 1; }
.hthumb { width: 100px; height: 17px; background: #cdcdcd; }
.nactions { height: 35px; display: flex; align-items: center; gap: 14px; padding-left: 9px; flex: none; }
.nactions svg { fill: none; stroke-width: 1; }
.blue { stroke: #3a86d8; }
.red { stroke: #e8452c; stroke-width: 2 !important; }
.phead.props { margin-left: 2px; flex: none; }
.phead.props .arr { margin-right: 7px; width: 21px; }
.proprow { display: flex; align-items: center; height: 26px; padding-left: 4px; flex: none; }
.proprow .ic { width: 16px; height: 15px; }
.pnum { margin-left: 3px; width: 39px; }
.pinput { flex: 1; height: 19px; background: #fff; border: 1px solid #888; box-sizing: border-box; display: flex; align-items: center; padding-left: 4px; }
.pfoot { flex: 1; padding: 0 0 1px 2px; box-sizing: border-box; display: flex; }
.pbox { flex: 1; border: 1px solid #bdbdbd; background: #ececec; }

.watermark { position: absolute; left: 2px; top: 388px; width: 156px; height: 38px; background: linear-gradient(180deg, rgba(150, 150, 150, .25) 0%, rgba(110, 110, 110, .62) 45%, rgba(80, 80, 80, .62) 100%); display: flex; align-items: center; }
.wlogo { position: absolute; left: -10px; top: -2px; }
.wm-x { margin-left: 27px; font-size: 29px; font-weight: 700; font-style: italic; letter-spacing: 0; background: linear-gradient(180deg, #fbb84a 0%, #ee7a1c 55%, #e04e0c 100%); -webkit-background-clip: text; background-clip: text; color: transparent; flex: none; }
.wm-sub { display: flex; flex-direction: column; align-items: flex-start; margin-left: 4px; line-height: 1; flex: none; }
.wm-s { font-size: 19px; font-weight: 700; font-style: italic; color: #efefef; }
.wm-c { font-size: 10.5px; font-style: italic; color: #f2f2f2; margin-top: 1px; letter-spacing: .4px; }

.status { height: 22px; flex: none; border-top: 1px solid #ccc; padding-left: 1px; display: flex; align-items: center; box-sizing: border-box; color: #222; }
.sright { margin-left: auto; display: flex; align-items: center; height: 100%; }
.sright .ic { margin-right: 7px; }
.svl { width: 1px; height: 100%; background: #bdbdbd; }
.gid { font-size: 13px; color: #2e2e2e; width: 128px; padding-left: 15px; box-sizing: border-box; white-space: nowrap; }
.sgrip { width: 21px; height: 100%; background: radial-gradient(#a8a8a8 35%, transparent 40%) right 1px bottom 1px / 4px 4px no-repeat, radial-gradient(#a8a8a8 35%, transparent 40%) right 5px bottom 1px / 4px 4px no-repeat, radial-gradient(#a8a8a8 35%, transparent 40%) right 1px bottom 5px / 4px 4px no-repeat; }
</style>
